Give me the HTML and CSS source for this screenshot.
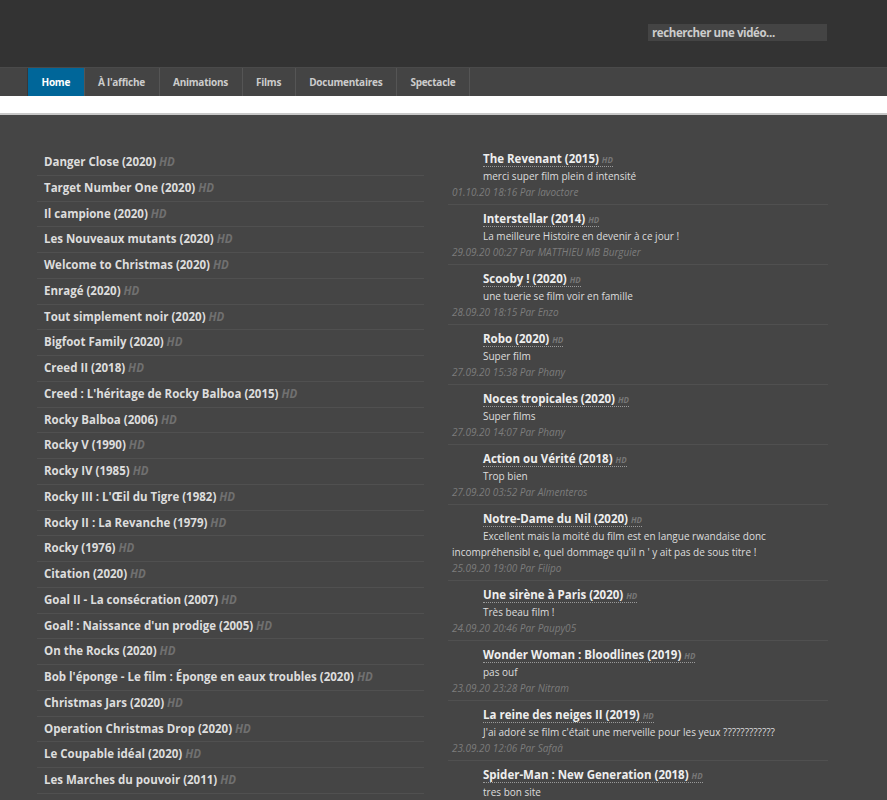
FILE: index.html
```html
<!DOCTYPE html>
<html lang="fr">
<head>
    <meta charset="UTF-8">
    <title>Home</title>
    <link rel="stylesheet" href="styles.css">
</head>
<body>
    <div class="header">
        <div class="search">rechercher une vidéo...</div>
    </div>
    <ul class="nav">
        <li class="active">Home</li>
        <li>À l'affiche</li>
        <li>Animations</li>
        <li>Films</li>
        <li>Documentaires</li>
        <li>Spectacle</li>
    </ul>
    <div class="band"></div>

    <div class="content">
        <ul class="films">
            <li>Danger Close (2020) <i>HD</i></li>
            <li>Target Number One (2020) <i>HD</i></li>
            <li>Il campione (2020) <i>HD</i></li>
            <li>Les Nouveaux mutants (2020) <i>HD</i></li>
            <li>Welcome to Christmas (2020) <i>HD</i></li>
            <li>Enragé (2020) <i>HD</i></li>
            <li>Tout simplement noir (2020) <i>HD</i></li>
            <li>Bigfoot Family (2020) <i>HD</i></li>
            <li>Creed II (2018) <i>HD</i></li>
            <li>Creed : L'héritage de Rocky Balboa (2015) <i>HD</i></li>
            <li>Rocky Balboa (2006) <i>HD</i></li>
            <li>Rocky V (1990) <i>HD</i></li>
            <li>Rocky IV (1985) <i>HD</i></li>
            <li>Rocky III : L'Œil du Tigre (1982) <i>HD</i></li>
            <li>Rocky II : La Revanche (1979) <i>HD</i></li>
            <li>Rocky (1976) <i>HD</i></li>
            <li>Citation (2020) <i>HD</i></li>
            <li>Goal II - La consécration (2007) <i>HD</i></li>
            <li>Goal! : Naissance d'un prodige (2005) <i>HD</i></li>
            <li>On the Rocks (2020) <i>HD</i></li>
            <li>Bob l'éponge - Le film : Éponge en eaux troubles (2020) <i>HD</i></li>
            <li>Christmas Jars (2020) <i>HD</i></li>
            <li>Operation Christmas Drop (2020) <i>HD</i></li>
            <li>Le Coupable idéal (2020) <i>HD</i></li>
            <li>Les Marches du pouvoir (2011) <i>HD</i></li>
        </ul>

        <ul class="comments">
            <li>
                <div class="title"><span>The Revenant (2015) <i>HD</i></span></div>
                <p>merci super film plein d intensité</p>
                <div class="meta">01.10.20 18:16 Par lavoctore</div>
            </li>
            <li>
                <div class="title"><span>Interstellar (2014) <i>HD</i></span></div>
                <p>La meilleure Histoire en devenir à ce jour !</p>
                <div class="meta">29.09.20 00:27 Par MATTHIEU MB Burguier</div>
            </li>
            <li>
                <div class="title"><span>Scooby ! (2020) <i>HD</i></span></div>
                <p>une tuerie se film voir en famille</p>
                <div class="meta">28.09.20 18:15 Par Enzo</div>
            </li>
            <li>
                <div class="title"><span>Robo (2020) <i>HD</i></span></div>
                <p>Super film</p>
                <div class="meta">27.09.20 15:38 Par Phany</div>
            </li>
            <li>
                <div class="title"><span>Noces tropicales (2020) <i>HD</i></span></div>
                <p>Super films</p>
                <div class="meta">27.09.20 14:07 Par Phany</div>
            </li>
            <li>
                <div class="title"><span>Action ou Vérité (2018) <i>HD</i></span></div>
                <p>Trop bien</p>
                <div class="meta">27.09.20 03:52 Par Almenteros</div>
            </li>
            <li>
                <div class="title"><span>Notre-Dame du Nil (2020) <i>HD</i></span></div>
                <p>Excellent mais la moité du film est en langue rwandaise donc incompréhensibl e, quel dommage qu'il n ' y ait pas de sous titre !</p>
                <div class="meta">25.09.20 19:00 Par Filipo</div>
            </li>
            <li>
                <div class="title"><span>Une sirène à Paris (2020) <i>HD</i></span></div>
                <p>Très beau film !</p>
                <div class="meta">24.09.20 20:46 Par Paupy05</div>
            </li>
            <li>
                <div class="title"><span>Wonder Woman : Bloodlines (2019) <i>HD</i></span></div>
                <p>pas ouf</p>
                <div class="meta">23.09.20 23:28 Par Nitram</div>
            </li>
            <li>
                <div class="title"><span>La reine des neiges II (2019) <i>HD</i></span></div>
                <p>J'ai adoré se film c'était une merveille pour les yeux ????????????</p>
                <div class="meta">23.09.20 12:06 Par Safaâ</div>
            </li>
            <li>
                <div class="title"><span>Spider-Man : New Generation (2018) <i>HD</i></span></div>
                <p>tres bon site</p>
            </li>
        </ul>
    </div>
</body>
</html>
```

FILE: styles.css
```css
body {
    margin: 0;
    background: #454545;
    font-family: "Open Sans", "Noto Sans", sans-serif;
    color: #ddd;
}
ul {
    list-style: none;
    margin: 0;
    padding: 0;
}
.header {
    height: 67px;
    background: #333;
    border-bottom: 1px solid #4a4a4a;
    position: relative;
}
.search {
    position: absolute;
    left: 648px;
    top: 24px;
    width: 175px;
    height: 17px;
    padding-left: 4px;
    background: #444;
    color: #ccc;
    font-size: 11.5px;
    font-weight: bold;
    line-height: 17px;
    letter-spacing: -0.4px;
}
.nav {
    display: flex;
    height: 28px;
    background: #444;
    padding-left: 27px;
}
.nav li {
    border-right: 1px solid #555;
    padding: 0 13.5px;
    font-size: 10px;
    font-weight: bold;
    line-height: 29px;
    color: #ccc;
    letter-spacing: -0.25px;
}
.nav li:first-child {
    border-left: 1px solid #383838;
}
.nav li.active {
    background: #006699;
    color: #fff;
}
.band {
    height: 17px;
    background: #fff;
    border-bottom: 2px solid #c8c8c8;
}
.content {
    display: flex;
    gap: 24px;
    padding: 35px 0 0 37px;
}
.films {
    width: 387px;
}
.films li {
    padding: 4px 7px;
    line-height: 16.75px;
    border-bottom: 1px solid #505050;
    font-size: 11.5px;
    font-weight: bold;
    color: #ddd;
    white-space: nowrap;
}
.films i {
    color: #707070;
}
.comments {
    width: 380px;
    margin-top: -5px;
}
.comments li {
    padding: 5px 4px 4px;
    border-bottom: 1px solid #505050;
}
.title {
    padding-left: 31px;
    height: 18px;
    line-height: 18px;
    font-size: 11.5px;
    font-weight: bold;
    color: #eee;
}
.title span {
    border-bottom: 1px dotted #999;
}
.title i {
    font-size: 8px;
    line-height: 0;
    color: #777;
}
.comments p {
    margin: 0;
    text-indent: 31px;
    font-size: 10px;
    line-height: 16px;
    color: #ddd;
}
.meta {
    font-size: 10px;
    font-style: italic;
    line-height: 16px;
    color: #7c7c7c;
}
```
